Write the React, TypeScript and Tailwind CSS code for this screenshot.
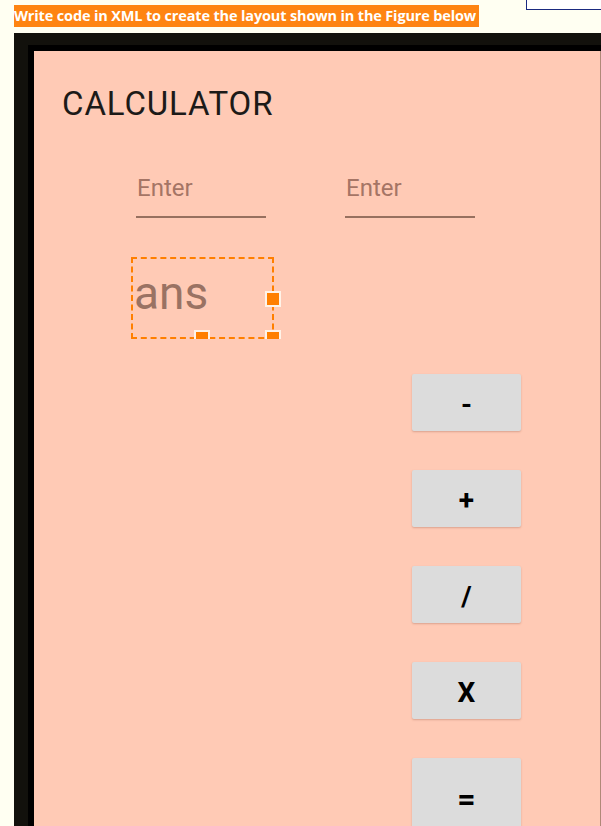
import React from 'react';

const ops = ['-', '+', '/', 'X'];

const Handle = ({ className }: { className: string }) => (
  <div className={`absolute w-[16px] bg-[#ff7f00] border-2 border-[#fff3e8] ${className}`} />
);

export default function App() {
  return (
    <div className="w-[601px] h-[826px] overflow-hidden bg-[#fffff2] relative font-['Roboto',sans-serif]">
      <div className="absolute top-0 left-[526px] w-[80px] h-[10px] bg-white border-l border-b border-[#1a2a80]" />
      <div className="h-[33px] pl-[14px] pt-[4px]">
        <div className="inline-flex items-center h-[22px] bg-[#fe8412] pr-[3px] text-white font-bold text-[14.5px] tracking-[-0.15px] font-['Open_Sans',sans-serif]">
          Write code in XML to create the layout shown in the Figure below
        </div>
      </div>
      <div className="ml-[14px] bg-[#12110c] pt-[12px] pl-[14px]">
        <div className="bg-black pt-[6px] pl-[6px]">
          <div className="bg-[#ffcab5] border-r border-[#b08878] h-[800px] flex flex-col">
            <div className="pl-[28px] pt-[33px] h-[96px] text-[33px] tracking-[0.9px] leading-[40px] text-[#1c1a18]">CALCULATOR</div>
            <div className="flex pl-[102px] gap-[79px] pt-[26px]">
              {[0, 1].map(i => (
                <div key={i} className="w-[130px]">
                  <div className="pl-[1px] text-[24px] leading-[30px] text-[#a57565]">Enter</div>
                  <div className="mt-[13px] h-[1.5px] bg-[#97705f]" />
                </div>
              ))}
            </div>
            <div className="ml-[97px] mt-[39px] relative w-[143px] h-[82px] border-2 border-dashed border-[#ff7f00]">
              <div className="pl-[1px] pt-[5px] text-[46px] leading-[58px] text-[#9a7263]">ans</div>
              <Handle className="h-[16px] right-[-9px] top-[32px]" />
              <Handle className="h-[9px] border-b-0 left-[61px] bottom-[-2px]" />
              <Handle className="h-[9px] border-b-0 right-[-9px] bottom-[-2px]" />
            </div>
            <div className="ml-[378px] mt-[35px] flex flex-col gap-[39px]">
              {ops.map(o => (
                <div key={o} className="w-[109px] h-[57px] rounded-[2px] bg-[#dcdcdc] shadow-[0_1px_2px_rgba(150,90,70,0.35)] flex items-center justify-center pt-[5px] text-[28px] font-bold text-black">
                  {o}
                </div>
              ))}
              <div className="w-[109px] h-[80px] rounded-[2px] bg-[#dcdcdc] shadow-[0_1px_2px_rgba(150,90,70,0.35)] flex items-center justify-center pt-[2px] text-[32px] font-bold text-black">
                =
              </div>
            </div>
          </div>
        </div>
      </div>
    </div>
  );
}
